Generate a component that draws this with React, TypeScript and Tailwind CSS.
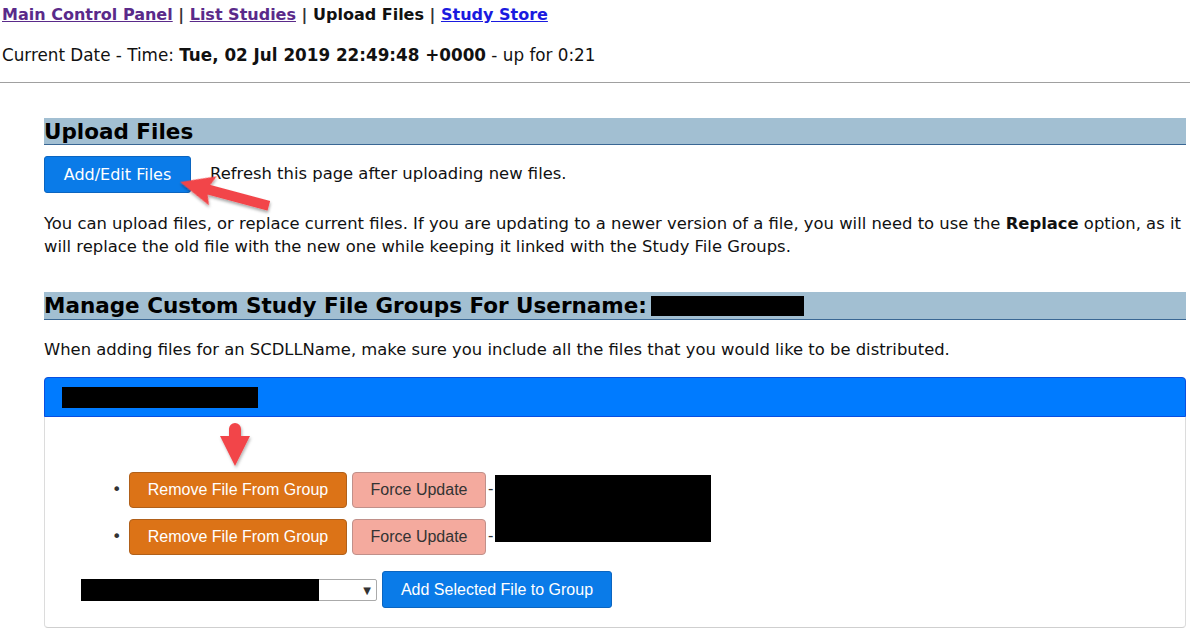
import React from 'react'

const body = { fontFamily: '"DejaVu Sans", Verdana, sans-serif' }
const arial = { fontFamily: '"Liberation Sans", Arial, sans-serif' }

function Redacted({ className }: { className: string }) {
  return <span className={`inline-block bg-black ${className}`} />
}

function LeftArrow() {
  // red callout arrow pointing at the Add/Edit button
  return (
    <svg className="absolute left-[176px] top-[164px] pointer-events-none" width="100" height="55" viewBox="0 0 100 55">
      <defs>
        <filter id="sh" x="-20%" y="-20%" width="140%" height="160%">
          <feDropShadow dx="1" dy="2" stdDeviation="1.5" floodColor="#000" floodOpacity="0.35" />
        </filter>
      </defs>
      <g transform="translate(4 18) rotate(15)" filter="url(#sh)">
        <polygon points="0,0 34,-15 30,-5 92,-5 92,5 30,5 34,15" fill="#f2454a" />
      </g>
    </svg>
  )
}

function DownArrow() {
  return (
    <svg className="absolute left-[218px] top-[422px] pointer-events-none" width="36" height="50" viewBox="0 0 36 50">
      <defs>
        <filter id="sh2" x="-30%" y="-20%" width="160%" height="150%">
          <feDropShadow dx="1" dy="2" stdDeviation="1.5" floodColor="#000" floodOpacity="0.3" />
        </filter>
      </defs>
      <path d="M11 7 a6 6 0 0 1 12 0 V14 H32 L17 44 L2 14 H11 Z" fill="#f2454a" filter="url(#sh2)" />
    </svg>
  )
}

function FileRow() {
  return (
    <li className="flex items-center h-[47px]">
      <span className="w-[14px] -ml-[4px] mr-[3px] text-[16px] leading-none text-[#333]">•</span>
      <button style={arial} className="h-[36px] px-[16px] bg-[#dc7317] border border-[#b0601a] rounded-[4px] text-white text-[16px] w-[218px]">
        Remove File From Group
      </button>
      <button style={arial} className="h-[36px] ml-[5px] w-[134px] bg-[#f4aa9e] border border-[#c0908a] rounded-[4px] text-[#333] text-[16px]">
        Force Update
      </button>
      <span className="ml-[2px] text-[#333] text-[15px]">-</span>
    </li>
  )
}

export default function App() {
  return (
    <div style={body} className="relative w-[1196px] h-[631px] overflow-hidden bg-white text-[#111] text-[16.4px]">
      <nav className="pl-[2px] pt-[4px] h-[28px] text-[16px] font-bold leading-[22px]">
        <a href="#" className="underline text-[#5a2a8a]">Main Control Panel</a>
        <span className="text-[#333]"> | </span>
        <a href="#" className="underline text-[#5a2a8a]">List Studies</a>
        <span className="text-[#333]"> | </span>
        <span>Upload Files</span>
        <span className="text-[#333]"> | </span>
        <a href="#" className="underline text-[#1a1adf]">Study Store</a>
      </nav>
      <p className="pl-[2px] mt-[16px] leading-[22px] text-[16.8px]">
        Current Date - Time: <b>Tue, 02 Jul 2019 22:49:48 +0000</b> - up for 0:21
      </p>
      <hr className="mt-[16px] mr-[6px] border-t border-[#a0a0a0]" />

      <main className="ml-[44px] mr-[10px]">
        <h2 className="mt-[35px] h-[27px] bg-[#a2bfd2] border-b border-[#3a6794] text-[21.5px] font-bold leading-[27px] text-black">
          Upload Files
        </h2>
        <div className="mt-[11px] flex items-center">
          <button className="h-[37px] w-[147px] bg-[#0a7be8] border border-[#0b65c0] rounded-[3px] text-white text-[16px]">
            Add/Edit Files
          </button>
          <span className="ml-[19px] -mt-[1px]">Refresh this page after uploading new files.</span>
        </div>
        <p className="mt-[19px] leading-[23px]">
          You can upload files, or replace current files. If you are updating to a newer version of a file, you will need to use the <b>Replace</b> option, as it will replace the old file with the new one while keeping it linked with the Study File Groups.
        </p>

        <h2 className="mt-[34px] h-[28px] flex items-center bg-[#a2bfd2] border-b border-[#3a6794] text-[21.5px] font-bold leading-[26px] text-black">
          Manage Custom Study File Groups For Username:
          <Redacted className="ml-[4px] w-[153px] h-[20px]" />
        </h2>
        <p className="mt-[18px] leading-[23px]">
          When adding files for an SCDLLName, make sure you include all the files that you would like to be distributed.
        </p>

        <section className="mt-[16px] rounded-[4px] border border-[#dcdcdc] border-b-[#cfcfcf]">
          <div className="h-[40px] -m-px bg-[#007bff] border border-[#0a4fe0] rounded-t-[4px] flex items-center pl-[17px]">
            <Redacted className="w-[196px] h-[21px]" />
          </div>
          <div className="pt-[50px] pb-[19px] pl-[36px]">
            <div className="flex">
              <ul className="pl-[35px]">
                <FileRow />
                <FileRow />
              </ul>
              <Redacted className="mt-[9px] ml-[2px] w-[216px] h-[67px]" />
            </div>
            <div className="mt-[11px] flex items-center">
              <div className="relative w-[296px] h-[22px] border border-[#aaa] rounded-[2px] bg-white">
                <Redacted className="absolute -left-px -top-px w-[238px] h-[22px]" />
                <span className="absolute right-[5px] top-[3px] text-[10px] text-[#333]">▼</span>
              </div>
              <button style={arial} className="ml-[5px] h-[37px] w-[230px] bg-[#0a7be8] border border-[#0b65c0] rounded-[3px] text-white text-[16px]">
                Add Selected File to Group
              </button>
            </div>
          </div>
        </section>
        <div className="mt-[3px] h-[2px] bg-[#d0d0d0]" />
      </main>

      <LeftArrow />
      <DownArrow />
    </div>
  )
}
